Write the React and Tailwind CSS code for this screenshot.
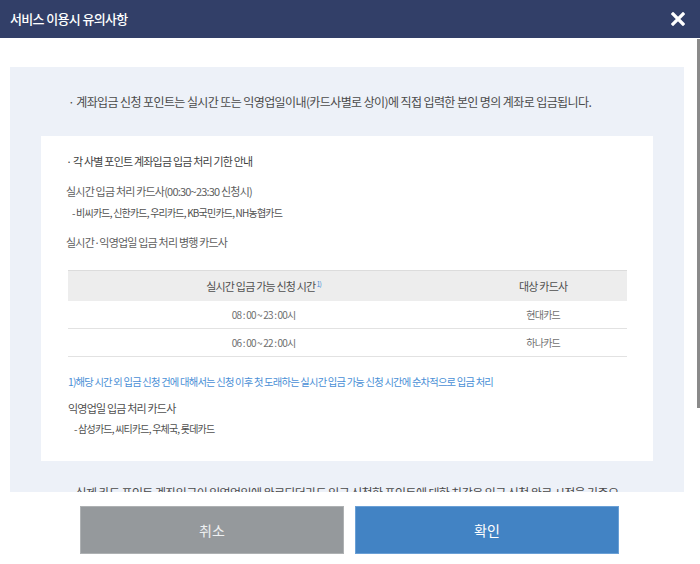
import React from "react";

const rows = [
  { time: "08 : 00 ~ 23 : 00시", card: "현대카드" },
  { time: "06 : 00 ~ 22 : 00시", card: "하나카드" },
];

const App = () => {
  return (
    <div className="w-[700px] h-[564px] bg-white flex flex-col overflow-hidden font-['Noto_Sans_CJK_KR',sans-serif]">
      {/* Header */}
      <header className="h-[38px] shrink-0 bg-[#323f68] flex items-center justify-between pl-[10px] pr-[15px]">
        <h1 className="text-white text-[13px] font-medium tracking-[-0.05em]">서비스 이용시 유의사항</h1>
        <button aria-label="닫기" className="w-[14px] h-[14px] flex items-center justify-center">
          <svg width="14" height="14" viewBox="0 0 14 14">
            <path d="M2 2 L12 12 M12 2 L2 12" stroke="#fff" strokeWidth="3.2" strokeLinecap="square" />
          </svg>
        </button>
      </header>

      {/* Scroll area */}
      <div className="relative h-[454px] shrink-0 overflow-hidden pt-[29px] pl-[10px] pr-[16px]">
        <div className="bg-[#edf1f8] px-[31px] pt-[25px] pb-[40px]">
          <p className="pl-[27px] leading-[20px] text-[12px] text-[#4a4a4a] tracking-[-0.05em]">
            · 계좌입금 신청 포인트는 실시간 또는 익영업일이내(카드사별로 상이)에 직접 입력한 본인 명의 계좌로 입금됩니다.
          </p>

          {/* White box */}
          <div className="mt-[24px] bg-white pl-[25px] pr-[27px] pt-[17px] pb-[24px] tracking-[-0.05em]">
            <p className="leading-[16px] text-[11px] text-[#3f3f3f]">· 각 사별 포인트 계좌입금 입금 처리 기한 안내</p>
            <p className="mt-[14px] leading-[16px] text-[11px] text-[#5e5e5e]">실시간 입금 처리 카드사(00:30~23:30 신청시)</p>
            <p className="mt-[6px] pl-[6px] leading-[16px] text-[10px] text-[#4f4f4f]">- 비씨카드, 신한카드, 우리카드, KB국민카드, NH농협카드</p>
            <p className="mt-[13px] leading-[16px] text-[11px] text-[#5e5e5e]">실시간·익영업일 입금 처리 병행 카드사</p>

            <table className="mt-[20px] ml-[2px] w-[559px] border-collapse text-center">
              <thead>
                <tr className="h-[30px] bg-[#ededed] border-t border-[#dcdcdc]">
                  <th className="w-[70%] font-normal text-[11px] text-[#4f4f4f]">
                    실시간 입금 가능 신청 시간<sup className="text-[7px] text-[#4a8fd6] ml-[1px]">1)</sup>
                  </th>
                  <th className="font-normal text-[11px] text-[#4f4f4f]">대상 카드사</th>
                </tr>
              </thead>
              <tbody>
                {rows.map((r) => (
                  <tr key={r.card} className="h-[28px] border-b border-[#e2e2e2]">
                    <td className="text-[10px] text-[#6f6f6f]">{r.time}</td>
                    <td className="text-[10px] text-[#6f6f6f]">{r.card}</td>
                  </tr>
                ))}
              </tbody>
            </table>

            <p className="mt-[17px] pl-[2px] leading-[16px] text-[10.3px] text-[#4a8fd6]">
              1)해당 시간 외 입금 신청 건에 대해서는 신청 이후 첫 도래하는 실시간 입금 가능 신청 시간에 순차적으로 입금 처리
            </p>
            <p className="mt-[10px] pl-[2px] leading-[16px] text-[11px] text-[#4f4f4f]">익영업일 입금 처리 카드사</p>
            <p className="mt-[5px] pl-[8px] leading-[16px] text-[10px] text-[#4f4f4f]">- 삼성카드, 씨티카드, 우체국, 롯데카드</p>
          </div>

          <p className="mt-[22px] px-[30px] text-center leading-[20px] text-[12px] text-[#4a4a4a] tracking-[-0.05em]">
            실제 카드 포인트 계좌입금이 익영업일에 완료되더라도 입금 신청한 포인트에 대한 차감은 입금 신청 완료 시점을 기준으로 합니다.
          </p>
        </div>

        {/* scrollbar thumb */}
        <div className="absolute right-0 top-[1px] w-[3px] h-[369px] bg-[#8a8a8a]" />
      </div>

      {/* Footer buttons */}
      <footer className="flex-1 flex justify-center gap-[11px] pt-[14px] pb-[10px] pr-[1px]">
        <button className="w-[264px] h-[48px] bg-[#95999c] border border-[#aeb1b3] text-[#eef0f1] text-[14px]">취소</button>
        <button className="w-[264px] h-[48px] bg-[#4283c4] border border-[#6aa0d6] text-white text-[14px]">확인</button>
      </footer>
    </div>
  );
};

export default App;
